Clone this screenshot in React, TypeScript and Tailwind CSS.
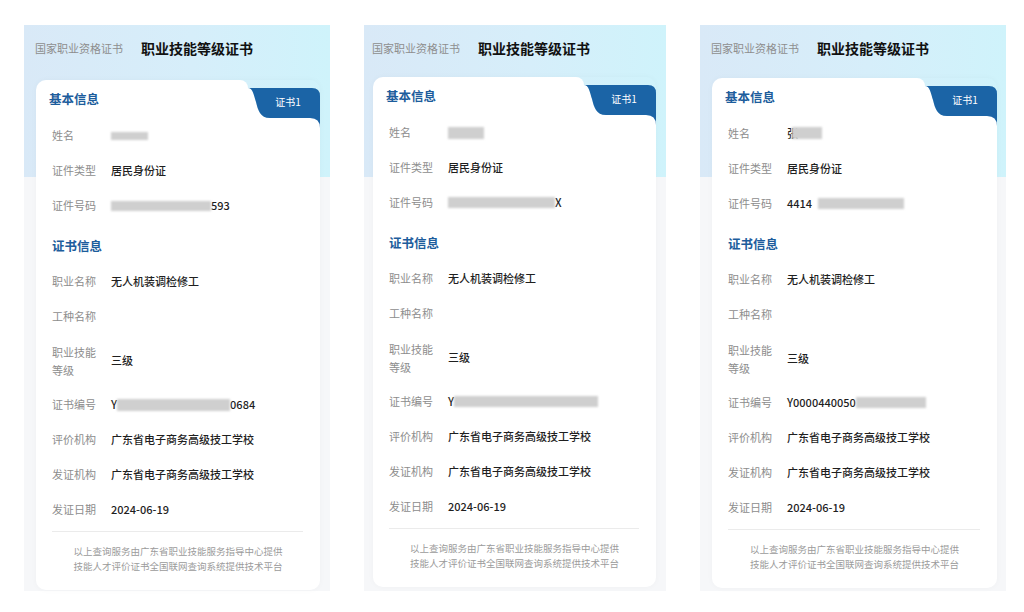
import React from "react";

const Blur = ({ w, h = 10, dark = false }: { w: number; h?: number; dark?: boolean }) => (
  <span
    className={
      "inline-block align-middle blur-[1.2px] " + (dark ? "bg-[#bdbdbd]" : "bg-[#cfcfcf]")
    }
    style={{ width: w, height: h }}
  />
);

type PanelCfg = {
  w: number;
  ml: number;
  mr: number;
  cardMt: number;
  name: React.ReactNode;
  idNo: React.ReactNode;
  certNo: React.ReactNode;
};

const Row = ({ label, value, tall = false }: { label: React.ReactNode; value?: React.ReactNode; tall?: boolean }) => (
  <div className={"flex items-center pl-[16px] " + (tall ? "h-[53px]" : "h-[35px]")}>
    <div className={"w-[59px] shrink-0 text-[11px] text-[#8d8d8d] " + (tall ? "leading-[18px]" : "leading-[15px]")}>
      {label}
    </div>
    <div className="flex items-center text-[11px] leading-[15px] font-medium text-[#1f1f1f] whitespace-nowrap">
      {value}
    </div>
  </div>
);

const Tab = () => (
  <div className="relative z-10 w-[72px] h-[38px] shrink-0">
    <svg width="72" height="48" viewBox="0 0 72 48" className="block">
      <path d="M0,8 C5,8 6,16 8,22 C10,30 12,38 22,38 L62,38 Q72,38 72,48 L0,48 Z" fill="#ffffff" />
      <path
        d="M0,8 L64,8 Q72,8 72,16 L72,48 Q72,38 62,38 L22,38 C12,38 10,30 8,22 C6,16 5,8 0,8 Z"
        fill="#1b64a6"
      />
    </svg>
    <span className="absolute left-[20px] top-[15px] w-[40px] text-center text-[10px] leading-[14px] text-white">
      证书1
    </span>
  </div>
);

const Panel = ({ cfg }: { cfg: PanelCfg }) => (
  <div
    className="h-[566px] shrink-0 flex flex-col bg-[#f6f7f9] bg-no-repeat bg-[length:100%_152px] bg-[linear-gradient(to_right,#d9e9f7,#d6eefa_55%,#cff3fb)]"
    style={{ width: cfg.w }}
  >
    <div className="h-[46px] flex items-center gap-[18px]" style={{ paddingLeft: cfg.ml - 1 }}>
      <span className="text-[11px] text-[#8e8e8e]">国家职业资格证书</span>
      <span className="text-[14px] font-bold text-[#111]">职业技能等级证书</span>
    </div>
    <div
      className="flex flex-col shadow-[0_0_6px_rgba(0,0,0,0.03)] rounded-[10px]"
      style={{ marginLeft: cfg.ml, marginRight: cfg.mr, marginTop: cfg.cardMt }}
    >
      <div className="flex h-[38px]">
        <div className="flex-1 bg-white rounded-tl-[10px] rounded-tr-[8px] flex items-center pl-[13px]">
          <span className="text-[12.5px] font-bold text-[#1d5d9c]">基本信息</span>
        </div>
        <Tab />
      </div>
      <div className="bg-white rounded-b-[10px] flex flex-col">
        <Row label="姓名" value={cfg.name} />
        <Row label="证件类型" value="居民身份证" />
        <Row label="证件号码" value={cfg.idNo} />
        <div className="h-[41px] pt-[15px] pl-[16px]">
          <span className="block text-[12.5px] leading-[16px] font-bold text-[#1d5d9c]">证书信息</span>
        </div>
        <Row label="职业名称" value="无人机装调检修工" />
        <Row label="工种名称" />
        <Row
          tall
          label={
            <>
              职业技能
              <br />
              等级
            </>
          }
          value="三级"
        />
        <Row label="证书编号" value={cfg.certNo} />
        <Row label="评价机构" value="广东省电子商务高级技工学校" />
        <Row label="发证机构" value="广东省电子商务高级技工学校" />
        <Row label="发证日期" value="2024-06-19" />
        <div className="mt-[4px] ml-[16px] mr-[17px] border-t border-[#ebebeb]" />
        <div className="pt-[12px] pb-[17px] text-center text-[9.5px] leading-[14.5px] text-[#9b9b9b] whitespace-nowrap">
          以上查询服务由广东省职业技能服务指导中心提供
          <br />
          技能人才评价证书全国联网查询系统提供技术平台
        </div>
      </div>
    </div>
  </div>
);

const panels: PanelCfg[] = [
  {
    w: 306,
    ml: 12,
    mr: 10,
    cardMt: 9,
    name: <Blur w={37} h={8} />,
    idNo: (
      <>
        <Blur w={100} h={10} />
        <span>593</span>
      </>
    ),
    certNo: (
      <>
        <span>Y</span>
        <Blur w={113} h={12} />
        <span>0684</span>
      </>
    ),
  },
  {
    w: 302,
    ml: 9,
    mr: 10,
    cardMt: 6,
    name: <Blur w={36} h={12} />,
    idNo: (
      <>
        <Blur w={107} h={11} />
        <span>X</span>
      </>
    ),
    certNo: (
      <>
        <span>Y</span>
        <Blur w={144} h={11} />
      </>
    ),
  },
  {
    w: 306,
    ml: 12,
    mr: 9,
    cardMt: 7,
    name: (
      <span className="relative inline-flex items-center">
        <span>张</span>
        <span className="absolute left-[5px] top-[1px] w-[30px] h-[12px] bg-[#cfcfcf] blur-[1.2px]" />
      </span>
    ),
    idNo: (
      <>
        <span>4414</span>
        <span className="w-[6px]" />
        <Blur w={86} h={11} />
      </>
    ),
    certNo: (
      <>
        <span>Y0000440050</span>
        <Blur w={70} h={11} />
      </>
    ),
  },
];

export default function App() {
  return (
    <div className="w-[1024px] h-[612px] bg-white pt-[25px] pl-[24px] flex gap-[34px] font-['Noto_Sans_CJK_SC','Noto_Sans',sans-serif] overflow-hidden">
      {panels.map((p, i) => (
        <Panel key={i} cfg={p} />
      ))}
    </div>
  );
}
